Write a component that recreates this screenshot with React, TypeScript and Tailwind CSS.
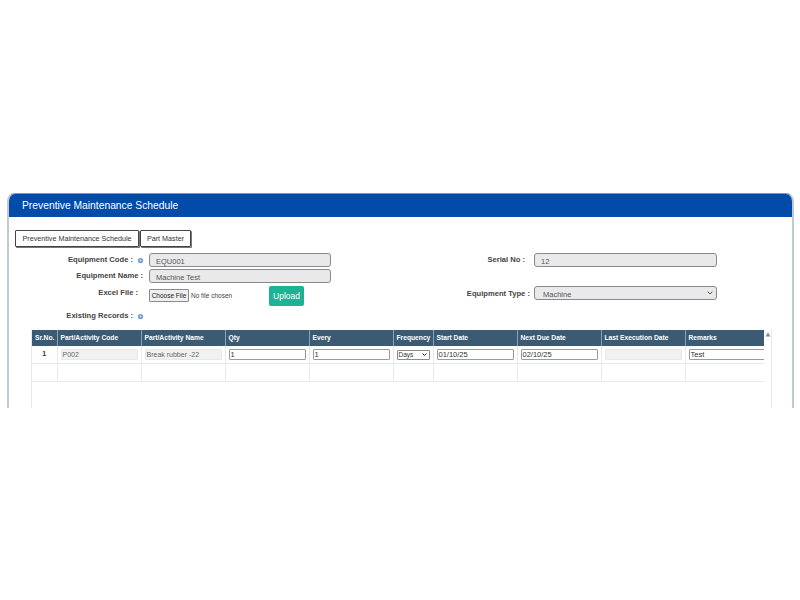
const font = { fontFamily: '"Liberation Sans", "Noto Sans", sans-serif' };

function Dot() {
  return (
    <svg width="7" height="7" viewBox="0 0 7 7" className="shrink-0 block">
      <circle cx="3.5" cy="3.5" r="2.6" fill="#6f9bd6" />
      <circle cx="3.5" cy="3.5" r="1" fill="#dbe7f7" />
    </svg>
  );
}

function Label({ text, w }: { text: string; w: string }) {
  return (
    <div className={`flex justify-end shrink-0 text-[7.6px] leading-none font-bold text-[#444] whitespace-nowrap ${w}`}>{text}</div>
  );
}

function Field({ value, className }: { value: string; className: string }) {
  return (
    <div className={`h-[14px] bg-[#e9e9ec] border border-[#8a8a8a] rounded-[3px] text-[7.5px] leading-none text-[#555] flex items-center pt-[3px] ${className}`}>
      {value}
    </div>
  );
}

const cols = [25, 84, 84, 84, 84, 40, 84, 84, 84, 84];
const heads = ["Sr.No.", "Part/Activity Code", "Part/Activity Name", "Qty", "Every", "Frequency", "Start Date", "Next Due Date", "Last Execution Date", "Remarks"];

function Ro({ v }: { v?: string }) {
  return <div className="h-[11px] mt-[1px] bg-[#f1f1f1] border border-[#e8e8e8] rounded-[1px] text-[7px] leading-[10px] text-[#666] pl-[1px] mr-[3px]">{v}</div>;
}
function Ed({ v, className = "mr-[3px]" }: { v: string; className?: string }) {
  return <div className={`h-[11px] mt-[1px] bg-white border border-[#9a9a9a] rounded-[1px] text-[7.5px] leading-[10px] text-[#333] pl-[1px] ${className}`}>{v}</div>;
}

export default function App() {
  return (
    <div className="w-[800px] h-[600px] bg-white overflow-hidden pt-[193px] pl-[7px]" style={font}>
      <div className="w-[787px] h-[215px] overflow-hidden rounded-t-[8px] border-x-2 border-[#c3c9d0] border-t border-t-[#7f9ab8] bg-white">
        <div className="h-[23px] bg-[#034ba9] text-white text-[10.3px] leading-[24px] pl-[13px]">Preventive Maintenance Schedule</div>

        <div className="flex mt-[13px] ml-[6px]">
          <div className="h-[17px] w-[124px] border border-[#444] rounded-[1px] text-[7.2px] leading-[15px] text-[#333] text-center shadow-[1px_1px_0_#777]">Preventive Maintenance Schedule</div>
          <div className="h-[17px] w-[51px] ml-[1px] border border-[#444] rounded-[1px] text-[7.2px] leading-[15px] text-[#333] text-center shadow-[1px_1px_0_#777]">Part Master</div>
        </div>

        <div className="flex mt-[6px]">
          <div className="w-[463px]">
            <div className="flex items-center h-[14px]">
              <Label text="Equipment Code :" w="w-[124px]" />
              <span className="ml-[4px]"><Dot /></span>
              <Field value="EQU001" className="w-[182px] ml-[5px] pl-[6px]" />
            </div>
            <div className="flex items-center h-[14px] mt-[2px]">
              <Label text="Equipment Name :" w="w-[134px]" />
              <Field value="Machine Test" className="w-[182px] ml-[6px] pl-[6px]" />
            </div>
            <div className="flex items-start h-[20px] mt-[3px]">
              <div className="pt-[3px]"><Label text="Excel File :" w="w-[129px]" /></div>
              <div className="flex items-center ml-[11px] mt-[3px]">
                <div className="h-[13px] w-[40px] bg-[#efefef] border border-[#8a8a8a] rounded-[1px] text-[6.5px] leading-[11px] text-[#222] text-center">Choose File</div>
                <span className="ml-[2px] w-[78px] text-[6.5px] text-[#444] whitespace-nowrap">No file chosen</span>
              </div>
              <div className="h-[20px] w-[35px] bg-[#1cb394] rounded-[2px] text-white text-[8.5px] leading-[21px] text-center">Upload</div>
            </div>
            <div className="flex items-center h-[10px] mt-[5px]">
              <Label text="Existing Records :" w="w-[124px]" />
              <span className="ml-[4px]"><Dot /></span>
            </div>
          </div>
          <div className="flex-1">
            <div className="flex items-center h-[14px]">
              <Label text="Serial No :" w="w-[53px]" />
              <Field value="12" className="w-[183px] ml-[9px] pl-[6px]" />
            </div>
            <div className="flex items-center h-[14px] mt-[19px]">
              <div className="pt-[1px]"><Label text="Equipment Type :" w="w-[58px]" /></div>
              <div className="w-[183px] h-[14px] ml-[4px] bg-[#e9e9ec] border border-[#8a8a8a] rounded-[3px] text-[7.5px] leading-none text-[#555] flex items-center justify-between pl-[8px] pr-[3px] pt-[3px]">
                <span>Machine</span>
                <svg width="6" height="4" viewBox="0 0 6 4" className="-mt-[4px]"><path d="M.7.7 3 3l2.3-2.3" fill="none" stroke="#555" strokeWidth="1" /></svg>
              </div>
            </div>
          </div>
        </div>

        <div className="flex ml-[22px] mt-[9px] w-[741px] h-[200px] border-r border-[#e8e8e8]">
          <div className="w-[733px] overflow-hidden border-l border-[#e8e8e8]">
            <table className="table-fixed border-collapse" style={{ width: 733 }}>
              <colgroup>{cols.map((w, i) => <col key={i} style={{ width: w }} />)}</colgroup>
              <thead>
                <tr className="h-[16px] bg-[#3b5b74]">
                  {heads.map((h) => (
                    <th key={h} className="text-left font-bold text-white text-[6.7px] leading-none pl-[3px] pr-0 whitespace-nowrap border-l border-[#8ca3b5] first:border-l-0">{h}</th>
                  ))}
                </tr>
              </thead>
              <tbody>
                <tr className="h-[17px] border-b border-[#e6ecec]">
                  <td className="text-center text-[7px] font-bold text-[#333] border-r border-[#e6ecec]">1</td>
                  <td className="pl-[3px] border-r border-[#e6ecec]"><Ro v="P002" /></td>
                  <td className="pl-[3px] border-r border-[#e6ecec]"><Ro v="Break rubber -22" /></td>
                  <td className="pl-[3px] border-r border-[#e6ecec]"><Ed v="1" /></td>
                  <td className="pl-[3px] border-r border-[#e6ecec]"><Ed v="1" /></td>
                  <td className="pl-[3px] border-r border-[#e6ecec]">
                    <div className="h-[10px] w-[33px] mt-[1px] border border-[#8a8a8a] rounded-[1px] text-[6.5px] leading-[8px] text-[#333] pl-[1px] flex justify-between items-center pr-[2px]">
                      <span>Days</span>
                      <svg width="5" height="3" viewBox="0 0 5 3"><path d="M.5.5 2.5 2.5 4.500.5" fill="none" stroke="#222" strokeWidth="1" /></svg>
                    </div>
                  </td>
                  <td className="pl-[3px] border-r border-[#e6ecec]"><Ed v="01/10/25" /></td>
                  <td className="pl-[3px] border-r border-[#e6ecec]"><Ed v="02/10/25" /></td>
                  <td className="pl-[3px] border-r border-[#e6ecec]"><Ro /></td>
                  <td className="pl-[3px]"><Ed v="Test" className="mr-0" /></td>
                </tr>
                <tr className="h-[18px] border-b border-[#e6ecec]">
                  {cols.map((_, i) => <td key={i} className="border-r border-[#e6ecec] last:border-r-0" />)}
                </tr>
              </tbody>
            </table>
          </div>
          <div className="flex-1 flex justify-center pt-[2px]">
            <svg width="6" height="5" viewBox="0 0 6 5"><path d="M3 .5 5.500 4.500H.5z" fill="#888" /></svg>
          </div>
        </div>
      </div>
    </div>
  );
}
